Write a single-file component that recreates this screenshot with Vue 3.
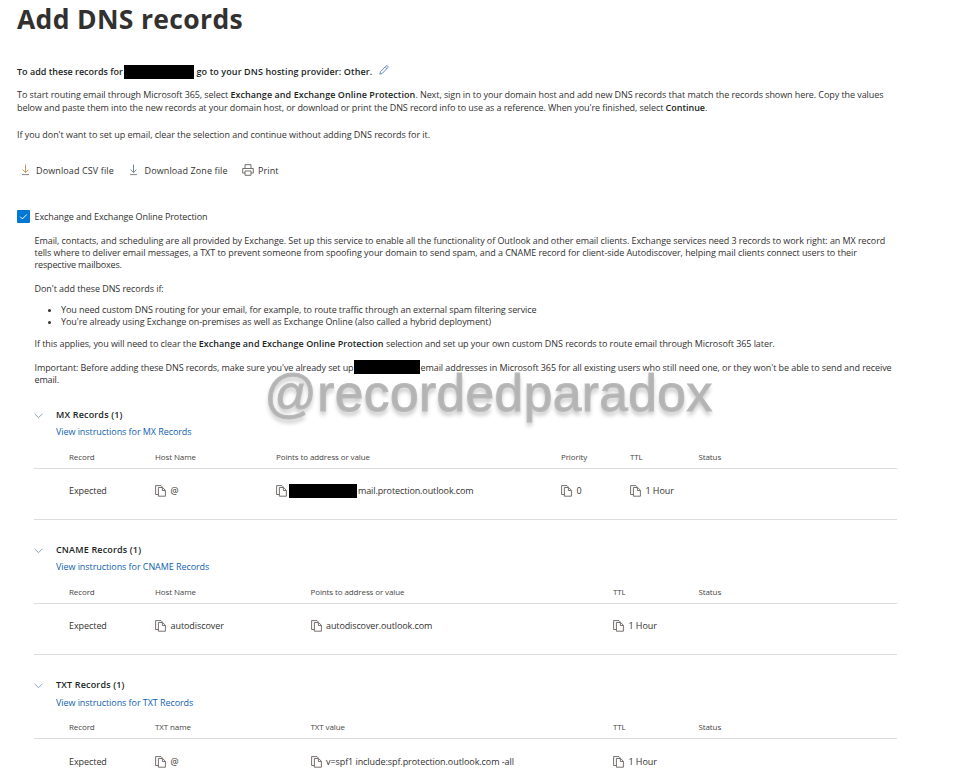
<script setup>
import { h } from 'vue'

const CopyIcon = () =>
  h('svg', { width: 11, height: 12, viewBox: '0 0 11 12', fill: 'none', stroke: '#66615e', 'stroke-width': 0.9 }, [
    h('path', { d: 'M3.2 9.500H.6V.6h5.400l1.200 1.300' }),
    h('path', { d: 'M3.4 2.500h4.300l2.700 2.800v5.900H3.400z' }),
    h('path', { d: 'M7.400 2.700v2.800h2.800' }),
  ])

const DownloadIcon = () =>
  h('svg', { width: 9, height: 12, viewBox: '0 0 9 12', fill: 'none', 'stroke-width': 0.9 }, [
    h('path', { d: 'M4.500 .5v8M1.500 5.600l3 3 3-3', stroke: 'currentColor' }),
    h('path', { d: 'M1 10.600h7', stroke: '#7b7876' }),
  ])

const sections = [
  {
    id: 'mx',
    title: 'MX Records (1)',
    link: 'View instructions for MX Records',
    headers: ['Record', 'Host Name', 'Points to address or value', 'Priority', 'TTL', 'Status'],
    cells: ['@', 'mail.protection.outlook.com', '0', '1 Hour'],
    redacted: 1,
  },
  {
    id: 'cname',
    title: 'CNAME Records (1)',
    link: 'View instructions for CNAME Records',
    headers: ['Record', 'Host Name', 'Points to address or value', 'TTL', 'Status'],
    cells: ['autodiscover', 'autodiscover.outlook.com', '1 Hour'],
    redacted: -1,
  },
  {
    id: 'txt',
    title: 'TXT Records (1)',
    link: 'View instructions for TXT Records',
    headers: ['Record', 'TXT name', 'TXT value', 'TTL', 'Status'],
    cells: ['@', 'v=spf1 include:spf.protection.outlook.com -all', '1 Hour'],
    redacted: -1,
  },
]
</script>

<template>
  <main class="page">
    <h1>Add DNS records</h1>

    <div class="provider">
      <b>To add these records for</b>
      <span class="redact redact-domain"></span>
      <b class="host">go to your DNS hosting provider: Other.</b>
      <svg class="pencil" width="10" height="10" viewBox="0 0 10 10" fill="none" stroke="#5b7fc4" stroke-width=".9">
        <path d="M.8 9.2l.7-2.6L7 1.1c.6-.6 1.3-.6 1.8-.1.5.5.5 1.2-.1 1.8L3.3 8.4zM6.2 1.9l1.8 1.8" />
      </svg>
    </div>

    <p class="intro">
      To start routing email through Microsoft 365, select <b>Exchange and Exchange Online Protection</b>. Next, sign in to your domain host and add new DNS records that match the records shown here. Copy the values<br />
      <span class="second">below and paste them into the new records at your domain host, or download or print the DNS record info to use as a reference. When you're finished, select <b class="continue">Continue</b>.</span>
    </p>
    <p class="intro skip">If you don't want to set up email, clear the selection and continue without adding DNS records for it.</p>

    <div class="actions">
      <span class="action csv"><DownloadIcon />Download CSV file</span>
      <span class="action zone"><DownloadIcon />Download Zone file</span>
      <span class="action print">
        <svg width="12" height="12" viewBox="0 0 12 12" fill="none" stroke="#66615e" stroke-width=".9">
          <path d="M3 4.5V.7h6v3.8M3 9H.7V4.5h10.600V9H9M3 7h6v4.300H3z" />
        </svg>Print
      </span>
    </div>

    <div class="check">
      <span class="box">
        <svg width="13" height="13" viewBox="0 0 13 13" fill="none" stroke="#fff" stroke-width="1">
          <path d="M3.200 6.700l2.200 2.200 4.500-4.500" />
        </svg>
      </span>
      <span>Exchange and Exchange Online Protection</span>
    </div>

    <div class="details">
      <p>
        Email, contacts, and scheduling are all provided by Exchange. Set up this service to enable all the functionality of Outlook and other email clients. Exchange services need 3 records to work right: an MX record<br />
        <span class="tells">tells where to deliver email messages, a TXT to prevent someone from spoofing your domain to send spam, and a CNAME record for client-side Autodiscover, helping mail clients connect users to their</span><br />
        <span class="tight">respective mailboxes.</span>
      </p>
      <p>Don't add these DNS records if:</p>
      <ul>
        <li class="route">You need custom DNS routing for your email, for example, to route traffic through an external spam filtering service</li>
        <li>You're already using Exchange on-premises as well as Exchange Online (also called a hybrid deployment)</li>
      </ul>
      <p class="applies">If this applies, you will need to clear the <b>Exchange and Exchange Online Protection</b> selection and set up your own custom DNS records to route email through Microsoft 365 later.</p>
      <div class="important">
        <span class="before">Important: Before adding these DNS records, make sure you've already set up</span>
        <span class="redact redact-mail"></span>
        <span class="following">email addresses in Microsoft 365 for all existing users who still need one, or they won't be able to send and receive</span>
      </div>
      <div class="tight">email.</div>
    </div>

    <section v-for="s in sections" :key="s.id" :class="['records', s.id]">
      <header>
        <svg class="chevron" width="9" height="6" viewBox="0 0 9 6" fill="none" stroke="#7f97b5" stroke-width=".9">
          <path d="M.6 .8l3.900 3.900L8.400 .8" />
        </svg>
        <h2>{{ s.title }}</h2>
      </header>
      <a class="link">{{ s.link }}</a>
      <div class="row head">
        <span v-for="t in s.headers" :key="t">{{ t }}</span>
      </div>
      <div class="row data">
        <span>Expected</span>
        <span v-for="(c, i) in s.cells" :key="i" class="cell">
          <CopyIcon />
          <span v-if="i === s.redacted" class="redact redact-host"></span>
          <span :class="{ after: c.includes('outlook.com') && !c.includes('=') }">{{ c }}</span>
        </span>
      </div>
    </section>

    <div class="watermark">@recordedparadox</div>
  </main>
</template>

<style>
body {
  background: #fff;
  overflow: hidden;
}
</style>

<style scoped>
.page {
  position: relative;
  box-sizing: border-box;
  width: 980px;
  height: 784px;
  padding-left: 17px;
  overflow: hidden;
  color: #323130;
  font: 9px/12px "Open Sans", "Noto Sans", sans-serif;
  letter-spacing: -0.069px;
  white-space: nowrap;
}
h1 {
  margin: 0;
  font-size: 26.5px;
  line-height: 39px;
  font-weight: 700;
  letter-spacing: 0.33px;
}
b {
  font-weight: 600;
  letter-spacing: 0.062px;
  color: #201f1e;
}
p {
  margin: 0;
}
.redact {
  flex: none;
  height: 14px;
  background: #000;
}
.provider {
  display: flex;
  align-items: center;
  height: 14px;
  margin-top: 26px;
}
.provider b {
  width: 107px;
  letter-spacing: 0;
}
.redact-domain {
  width: 70px;
}
.provider .host {
  width: 182px;
  padding-left: 2.5px;
  box-sizing: border-box;
  letter-spacing: 0.105px;
}
.pencil {
  margin: -5px 0 0 2.5px;
}
.intro {
  margin-top: 9px;
  line-height: 13px;
  letter-spacing: -0.074px;
}
.second {
  letter-spacing: -0.08px;
}
.intro .continue {
  letter-spacing: -0.014px;
}
.intro.skip {
  margin-top: 14px;
  letter-spacing: -0.05px;
}
.actions {
  display: flex;
  align-items: center;
  height: 14px;
  margin-top: 23px;
  letter-spacing: 0.115px;
}
.action {
  display: flex;
  align-items: center;
}
.action svg {
  flex: none;
  margin-top: -2px;
}
.csv {
  width: 108.5px;
  padding-left: 3.5px;
  box-sizing: border-box;
}
.csv svg {
  color: #c08a50;
  margin-right: 6.5px;
}
.zone {
  width: 113px;
  padding-left: 3.5px;
  box-sizing: border-box;
}
.zone svg {
  color: #607a90;
  margin-right: 6.5px;
}
.print {
  padding-left: 3px;
}
.print svg {
  margin-right: 4.5px;
}
.check {
  display: flex;
  align-items: center;
  gap: 4.5px;
  height: 13px;
  margin-top: 32px;
  letter-spacing: -0.09px;
}
.box {
  width: 13px;
  height: 13px;
  border-radius: 1px;
  background: #0078d4;
}
.box svg {
  display: block;
}
.details {
  margin-top: 12px;
  padding-left: 17.5px;
  height: 174px;
}
.details p {
  margin-bottom: 12px;
}
.tells {
  letter-spacing: -0.06px;
}
.tight {
  letter-spacing: -0.15px;
}
ul {
  margin: -3px 0 10px;
  padding: 0 0 0 26.5px;
}
.route {
  letter-spacing: -0.083px;
}
.details p.applies {
  margin-bottom: 10px;
}
.important {
  display: flex;
  align-items: center;
  height: 14px;
  padding-top: 1px;
}
.before {
  width: 319.5px;
  letter-spacing: -0.094px;
}
.following {
  letter-spacing: -0.075px;
}
.redact-mail {
  width: 66px;
  margin-right: 0.5px;
}
.important .redact {
  margin-top: -2px;
}
.important + .tight {
  margin-top: -1px;
}
.records {
  height: 135px;
  margin-left: 17px;
  width: 863px;
}
header {
  display: flex;
  align-items: center;
  height: 12px;
}
.chevron {
  margin: 2px 13px 0 0;
}
h2 {
  margin: 0;
  font-size: 9px;
  line-height: 12px;
  font-weight: 600;
  letter-spacing: 0.17px;
  color: #201f1e;
}
.link {
  display: block;
  height: 12px;
  margin: 5px 0 8px 22px;
  color: #0f62b0;
}
.txt .link {
  margin: 6px 0 7px 22px;
}
.row {
  display: grid;
  grid-template-columns: 86px 155.5px 302.5px 85.5px 1fr;
  padding-left: 35px;
  box-sizing: border-box;
}
.mx .row {
  grid-template-columns: 86px 121px 285px 69px 68.5px 1fr;
}
.head {
  height: 23px;
  border-bottom: 1px solid #dedcda;
  font-size: 8px;
  line-height: 22px;
  letter-spacing: -0.11px;
  color: #484644;
}
.data {
  height: 51px;
  padding-top: 16px;
  border-bottom: 1px solid #dedcda;
}
.txt .data {
  padding-top: 17px;
}
.cell {
  display: flex;
  height: 12px;
  align-items: center;
}
.cell svg {
  flex: none;
  margin: -1px 4.5px 0 0;
}
.redact-host {
  width: 68px;
  margin: 0 1px 0 -2.5px;
}
.after {
  letter-spacing: -0.115px;
}
.watermark {
  position: absolute;
  left: 264.5px;
  top: 368px;
  font: 51.5px/50px "Liberation Sans", sans-serif;
  letter-spacing: 0.4px;
  color: #b4b4b4;
  -webkit-text-stroke: 1px #b9b9b9;
  text-shadow: 0 4px 4px rgba(0, 0, 0, 0.24);
}
</style>
